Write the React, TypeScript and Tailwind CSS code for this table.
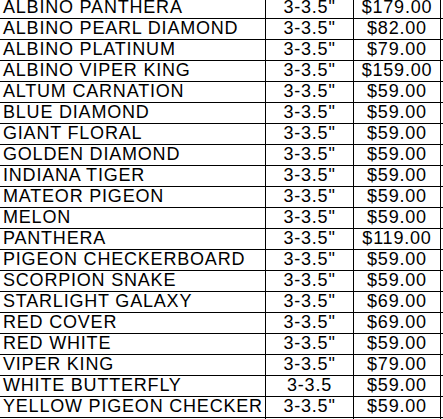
const rows: [string, string, string][] = [
  ['ALBINO PANTHERA', '3-3.5"', '$179.00'],
  ['ALBINO PEARL DIAMOND', '3-3.5"', '$82.00'],
  ['ALBINO PLATINUM', '3-3.5"', '$79.00'],
  ['ALBINO VIPER KING', '3-3.5"', '$159.00'],
  ['ALTUM CARNATION', '3-3.5"', '$59.00'],
  ['BLUE DIAMOND', '3-3.5"', '$59.00'],
  ['GIANT FLORAL', '3-3.5"', '$59.00'],
  ['GOLDEN DIAMOND', '3-3.5"', '$59.00'],
  ['INDIANA TIGER', '3-3.5"', '$59.00'],
  ['MATEOR PIGEON', '3-3.5"', '$59.00'],
  ['MELON', '3-3.5"', '$59.00'],
  ['PANTHERA', '3-3.5"', '$119.00'],
  ['PIGEON CHECKERBOARD', '3-3.5"', '$59.00'],
  ['SCORPION SNAKE', '3-3.5"', '$59.00'],
  ['STARLIGHT GALAXY', '3-3.5"', '$69.00'],
  ['RED COVER', '3-3.5"', '$69.00'],
  ['RED WHITE', '3-3.5"', '$59.00'],
  ['VIPER KING', '3-3.5"', '$79.00'],
  ['WHITE BUTTERFLY', '3-3.5', '$59.00'],
  ['YELLOW PIGEON CHECKER', '3-3.5"', '$59.00'],
  ['', '', ''],
];

export default function App() {
  return (
    <div className="w-[443px] h-[419px] overflow-hidden bg-white">
      <div
        className="-mt-[2px] text-black text-[18px] leading-[18px] tracking-[0.8px]"
        style={{ fontFamily: '"Liberation Sans", Arial, sans-serif' }}
      >
        {rows.map(([name, size, price], i) => (
          <div key={i} className="flex h-[21px] border-b border-black">
            <div className="w-[266px] shrink-0 border-r border-black pl-[3px] overflow-hidden whitespace-nowrap">
              {name}
            </div>
            <div className="w-[88px] shrink-0 border-r border-black text-center whitespace-nowrap">
              {size}
            </div>
            <div className="w-[87px] shrink-0 border-r border-black text-center whitespace-nowrap">
              {price}
            </div>
            <div className="flex-1" />
          </div>
        ))}
      </div>
    </div>
  );
}
